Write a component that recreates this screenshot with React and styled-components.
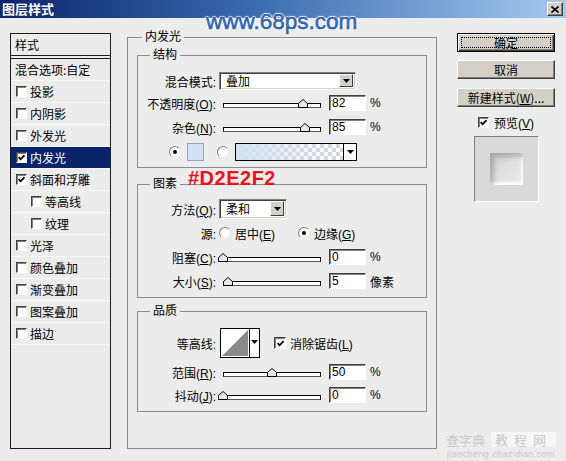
import React from "react";
import styled, { createGlobalStyle, css } from "styled-components";

const GlobalStyle = createGlobalStyle`
  html, body { margin: 0; padding: 0; background: #ececec; }
  body {
    font-family: "Liberation Sans", "Noto Sans CJK SC", sans-serif;
    font-size: 12px;
    color: #000;
  }
`;

const Window = styled.div`
  position: relative;
  width: 566px;
  height: 461px;
  background: #ececec;
  overflow: hidden;
`;

const TitleBar = styled.div`
  height: 18px;
  display: flex;
  align-items: center;
  justify-content: space-between;
  padding: 0 3px 0 2px;
  background: linear-gradient(to right, #0a246a 0%, #3b6bb0 45%, #a6caf0 100%);
`;

const Title = styled.span`
  color: #fff;
  font-family: "Noto Sans CJK SC", sans-serif;
  font-weight: 700;
  font-size: 13px;
  line-height: 14px;
`;

const CloseButton = styled.div`
  width: 16px;
  height: 14px;
  box-sizing: border-box;
  display: flex;
  align-items: center;
  justify-content: center;
  background: #d4d0c8;
  border: 1px solid;
  border-color: #fff #404040 #404040 #fff;
  box-shadow: inset -1px -1px 0 #808080;
`;

const SiteMark = styled.div`
  position: absolute;
  left: 206px;
  top: 11px;
  font-family: "Liberation Sans", sans-serif;
  font-size: 22.5px;
  line-height: 22px;
  color: #3570c2;
  text-shadow: 1px 0 0 #fff, -1px 0 0 #fff, 0 1px 0 #fff, 0 -1px 0 #fff, 0 0 3px #fff;
  -webkit-text-stroke: 0.5px #1d4a8c;
`;

const ColorNote = styled.div`
  position: absolute;
  left: 188px;
  top: 168px;
  font-family: "Liberation Sans", sans-serif;
  font-weight: 700;
  font-size: 20px;
  line-height: 20px;
  letter-spacing: 0.5px;
  color: #e8121b;
`;

const CornerMark = styled.div`
  position: absolute;
  right: 10px;
  bottom: 2px;
  display: flex;
  flex-direction: column;
  align-items: center;
  gap: 2px;
  color: #c9c9c9;
`;

const CornerTop = styled.div`
  display: flex;
  align-items: center;
  gap: 6px;
  font-family: "Noto Sans CJK SC", sans-serif;
  font-size: 13px;
  line-height: 15px;
`;

const CornerBox = styled.span`
  background: #f6f6f6;
  padding: 0 4px;
  letter-spacing: 6px;
  border-radius: 2px;
`;

const CornerUrl = styled.div`
  font-size: 9px;
  line-height: 10px;
  letter-spacing: 0.4px;
`;

const Body = styled.div`
  display: flex;
  align-items: flex-start;
  padding: 12px 0 0 10px;
`;

/* ---------- left list ---------- */

const Sidebar = styled.div`
  margin-top: 3px;
  width: 101px;
  height: 416px;
  box-sizing: border-box;
  border: 1px solid #1c1c1c;
  font-family: "Noto Sans CJK SC", sans-serif;
`;

const SideHeader = styled.div`
  height: 21px;
  line-height: 21px;
  padding-left: 4px;
  border-bottom: 4px double #1c1c1c;
`;

const SideItem = styled.div`
  display: flex;
  align-items: center;
  gap: 3px;
  height: 21px;
  border-bottom: 1px solid #f8f8f8;
  padding-left: ${(p) => (p.$indent ? 20 : p.$plain ? 4 : 5)}px;
  background: ${(p) => (p.$selected ? "#0a246a" : "transparent")};
  color: ${(p) => (p.$selected ? "#fff" : "#000")};
  white-space: nowrap;
`;

const CheckBox = styled.span`
  flex: none;
  width: ${(p) => p.$size || 11}px;
  height: ${(p) => p.$size || 11}px;
  box-sizing: border-box;
  display: inline-flex;
  align-items: center;
  justify-content: center;
  background: #fff;
  border: 1px solid;
  border-color: #404040 #fff #fff #404040;
  box-shadow: inset 1px 1px 0 #808080;
`;

const Tick = () => (
  <svg width="7" height="7" viewBox="0 0 7 7">
    <path d="M0.6 3.2 L2.6 5.3 L6.5 1.2" fill="none" stroke="#000" strokeWidth="1.7" />
  </svg>
);

function Check({ on, size }) {
  return <CheckBox $size={size}>{on && <Tick />}</CheckBox>;
}

/* ---------- main groups ---------- */

const Main = styled.div`
  margin-left: 16px;
  width: 310px;
`;

const Group = styled.fieldset`
  margin: ${(p) => (p.$outer ? "0" : `${p.$top}px 9px 0`)};
  padding: ${(p) => `${p.$pt}px 0 ${p.$pb}px`};
  border: 1px solid #8c8c8c;
  min-width: 0;
  font-family: "Liberation Sans", "Noto Sans CJK SC", sans-serif;
`;

const Legend = styled.legend`
  margin-left: ${(p) => p.$inset}px;
  padding: 0 3px;
  line-height: 14px;
  font-size: 12px;
`;

const Row = styled.div`
  display: flex;
  align-items: center;
  height: ${(p) => p.$h || 16}px;
  margin-top: ${(p) => p.$mt || 0}px;
  white-space: nowrap;
`;

const Label = styled.span`
  flex: none;
  width: 78px;
  margin-right: 3px;
  text-align: right;
`;

const SelectBox = styled.div`
  width: ${(p) => p.$w}px;
  height: ${(p) => p.$h}px;
  box-sizing: border-box;
  display: flex;
  align-items: stretch;
  background: #fff;
  border: 1px solid;
  border-color: #808080 #fff #fff #808080;
  box-shadow: inset 1px 1px 0 #404040, inset -1px -1px 0 #d4d0c8;
  padding: 1px 2px 2px 1px;
`;

const SelectText = styled.span`
  flex: 1;
  display: flex;
  align-items: center;
  padding-left: 5px;
`;

const DropButton = styled.span`
  width: 14px;
  box-sizing: border-box;
  display: flex;
  align-items: center;
  justify-content: center;
  background: #d4d0c8;
  border: 1px solid;
  border-color: #fff #404040 #404040 #fff;
`;

const Arrow = () => (
  <svg width="7" height="4" viewBox="0 0 7 4">
    <path d="M0 0 H7 L3.5 4 Z" fill="#000" />
  </svg>
);

function Select({ value, w, h }) {
  return (
    <SelectBox $w={w} $h={h}>
      <SelectText>{value}</SelectText>
      <DropButton>
        <Arrow />
      </DropButton>
    </SelectBox>
  );
}

const SliderBox = styled.div`
  position: relative;
  flex: none;
  width: 98px;
  height: 16px;
  margin: 0 8px 0 4px;
  padding-top: 8px;
  box-sizing: border-box;
`;

const Track = styled.div`
  height: 5px;
  box-sizing: border-box;
  border: 1px solid #000;
  border-bottom-color: #555;
  background: #fff;
`;

const Thumb = styled.svg`
  position: absolute;
  top: 4px;
`;

function Slider({ pct }) {
  return (
    <SliderBox>
      <Track />
      <Thumb width="10" height="9" viewBox="0 0 10 9" style={{ left: Math.round(pct * 0.97) - 5 }}>
        <path d="M0.5 8.5 V4.5 L5 0.5 L9.5 4.5 V8.5 Z" fill="#e8e8e8" stroke="#000" />
      </Thumb>
    </SliderBox>
  );
}

const NumBox = styled.div`
  flex: none;
  width: 37px;
  height: 16px;
  box-sizing: border-box;
  background: #fff;
  border: 1px solid;
  border-color: #404040 #fff #fff #404040;
  box-shadow: inset 1px 1px 0 #808080;
  padding-left: 2px;
  line-height: 14px;
`;

const Unit = styled.span`
  margin-left: 4px;
`;

function SliderRow({ label, pct, value, unit, mt }) {
  return (
    <Row $mt={mt}>
      <Label>{label}</Label>
      <Slider pct={pct} />
      <NumBox>{value}</NumBox>
      <Unit>{unit}</Unit>
    </Row>
  );
}

const RadioDot = styled.span`
  flex: none;
  width: 12px;
  height: 12px;
  box-sizing: border-box;
  border-radius: 50%;
  display: inline-flex;
  align-items: center;
  justify-content: center;
  background: #fff;
  border: 1px solid;
  border-color: #808080 #e8e8e8 #e8e8e8 #808080;
  margin-left: ${(p) => p.$ml || 0}px;

  &::after {
    content: "";
    width: 4px;
    height: 4px;
    border-radius: 50%;
    background: #000;
    display: ${(p) => (p.$on ? "block" : "none")};
  }
`;

const OptText = styled.span`
  margin-left: 4px;
`;

const Swatch = styled.span`
  flex: none;
  width: 17px;
  height: 18px;
  box-sizing: border-box;
  margin: 0 13px 0 6px;
  background: #d2e2f2;
  border: 1px solid #9aa6b4;
`;

const GradientBox = styled.span`
  flex: none;
  display: flex;
  width: 122px;
  height: 18px;
  margin-left: 6px;
  box-sizing: border-box;
  border: 1px solid #000;
`;

const GradientFill = styled.span`
  flex: 1;
  background: linear-gradient(to right, #d2e2f2 0%, rgba(210, 226, 242, 0.55) 45%, rgba(210, 226, 242, 0) 95%),
    repeating-conic-gradient(#d6d6d6 0 25%, #fff 0 50%) 0 0 / 8px 8px;
`;

const GradientDrop = styled.span`
  width: 12px;
  display: flex;
  align-items: center;
  justify-content: center;
  background: #fff;
  border-left: 1px solid #000;
`;

const ContourBox = styled.span`
  flex: none;
  display: flex;
  width: 40px;
  height: 30px;
  margin-left: 1px;
  box-sizing: border-box;
  border: 1px solid #000;
  background: #fff;
`;

const ContourDrop = styled.span`
  width: 10px;
  display: flex;
  justify-content: center;
  padding-top: 11px;
  box-sizing: border-box;
  border-left: 1px solid #000;
`;

const AntiAlias = styled.span`
  display: flex;
  align-items: center;
  gap: 4px;
  margin-left: 14px;
`;

/* ---------- right column ---------- */

const RightCol = styled.div`
  margin: 3px 0 0 20px;
  width: 98px;
  display: flex;
  flex-direction: column;
  font-family: "Noto Sans CJK SC", "Liberation Sans", sans-serif;
`;

const Button = styled.div`
  height: 19px;
  margin-top: ${(p) => p.$mt || 0}px;
  box-sizing: border-box;
  display: flex;
  align-items: center;
  justify-content: center;
  background: #d4d0c8;
  border: 1px solid;
  border-color: #fff #404040 #404040 #fff;
  box-shadow: inset -1px -1px 0 #808080;
  white-space: nowrap;

  ${(p) =>
    p.$default &&
    css`
      border-color: #000;
      box-shadow: inset 1px 1px 0 #fff, inset -1px -1px 0 #404040, inset -2px -2px 0 #808080;
      padding: 3px;
    `}
`;

const FocusRing = styled.span`
  flex: 1;
  align-self: stretch;
  display: flex;
  align-items: center;
  justify-content: center;
  border: 1px dotted #000;
`;

const PreviewToggle = styled.div`
  margin-top: 8px;
  height: 14px;
  display: flex;
  align-items: center;
  justify-content: center;
  gap: 5px;
  font-family: "Liberation Sans", "Noto Sans CJK SC", sans-serif;
`;

const PreviewBox = styled.div`
  align-self: center;
  margin-top: 7px;
  width: 65px;
  height: 66px;
  box-sizing: border-box;
  display: flex;
  align-items: center;
  justify-content: center;
  background: #d9d9d9;
  border: 1px solid;
  border-color: #7c7c7c #fff #fff #7c7c7c;
`;

const PreviewTile = styled.div`
  width: 33px;
  height: 32px;
  background: linear-gradient(135deg, #c9c9c9 0%, #dedede 45%, #ebebeb 100%);
  box-shadow: inset 4px 4px 4px rgba(0, 0, 0, 0.18), inset -2px -3px 3px #fafafa;
`;

const sideItems = [
  { name: "投影" },
  { name: "内阴影" },
  { name: "外发光" },
  { name: "内发光", on: true, selected: true },
  { name: "斜面和浮雕", on: true },
  { name: "等高线", indent: true },
  { name: "纹理", indent: true },
  { name: "光泽" },
  { name: "颜色叠加" },
  { name: "渐变叠加" },
  { name: "图案叠加" },
  { name: "描边" },
];

export default function App() {
  return (
    <Window>
      <GlobalStyle />
      <TitleBar>
        <Title>图层样式</Title>
        <CloseButton>
          <svg width="8" height="7" viewBox="0 0 8 7">
            <path d="M0.5 0.5 L7.5 6.5 M7.5 0.5 L0.5 6.5" stroke="#000" strokeWidth="1.6" />
          </svg>
        </CloseButton>
      </TitleBar>

      <Body>
        <Sidebar>
          <SideHeader>样式</SideHeader>
          <SideItem $plain>混合选项:自定</SideItem>
          {sideItems.map((it) => (
            <SideItem key={it.name} $indent={it.indent} $selected={it.selected}>
              <Check on={it.on} />
              <span>{it.name}</span>
            </SideItem>
          ))}
        </Sidebar>

        <Main>
          <Group $outer $pt={4} $pb={36}>
            <Legend $inset={14}>内发光</Legend>

            <Group $top={0} $pt={10} $pb={6}>
              <Legend $inset={12}>结构</Legend>
              <Row $h={18}>
                <Label>混合模式:</Label>
                <Select value="叠加" w={137} h={18} />
              </Row>
              <SliderRow
                mt={5}
                label={<>不透明度(<u>O</u>):</>}
                pct={82}
                value="82"
                unit="%"
              />
              <SliderRow mt={8} label={<>杂色(<u>N</u>):</>} pct={85} value="85" unit="%" />
              <Row $h={18} $mt={8}>
                <RadioDot $on $ml={31} />
                <Swatch />
                <RadioDot />
                <GradientBox>
                  <GradientFill />
                  <GradientDrop>
                    <Arrow />
                  </GradientDrop>
                </GradientBox>
              </Row>
            </Group>

            <Group $top={9} $pt={8} $pb={8}>
              <Legend $inset={12}>图素</Legend>
              <Row $h={20}>
                <Label>方法(<u>Q</u>):</Label>
                <Select value="柔和" w={68} h={20} />
              </Row>
              <Row $mt={6}>
                <Label>源:</Label>
                <RadioDot />
                <OptText>居中(<u>E</u>)</OptText>
                <RadioDot $on $ml={23} />
                <OptText>边缘(<u>G</u>)</OptText>
              </Row>
              <SliderRow mt={8} label={<>阻塞(<u>C</u>):</>} pct={0} value="0" unit="%" />
              <SliderRow mt={8} label={<>大小(<u>S</u>):</>} pct={5} value="5" unit="像素" />
            </Group>

            <Group $top={6} $pt={10} $pb={8}>
              <Legend $inset={12}>品质</Legend>
              <Row $h={30}>
                <Label>等高线:</Label>
                <ContourBox>
                  <svg width="28" height="28" viewBox="0 0 28 28">
                    <path d="M1 27 L27 1 L27 27 Z" fill="#8a8a8a" />
                  </svg>
                  <ContourDrop>
                    <Arrow />
                  </ContourDrop>
                </ContourBox>
                <AntiAlias>
                  <Check on size={12} />
                  <span>
                    消除锯齿(<u>L</u>)
                  </span>
                </AntiAlias>
              </Row>
              <SliderRow mt={6} label={<>范围(<u>R</u>):</>} pct={50} value="50" unit="%" />
              <SliderRow mt={7} label={<>抖动(<u>J</u>):</>} pct={0} value="0" unit="%" />
            </Group>
          </Group>
        </Main>

        <RightCol>
          <Button $default>
            <FocusRing>确定</FocusRing>
          </Button>
          <Button $mt={8}>取消</Button>
          <Button $mt={9}>
            <span>
              新建样式(<u>W</u>)...
            </span>
          </Button>
          <PreviewToggle>
            <Check on />
            <span>
              预览(<u>V</u>)
            </span>
          </PreviewToggle>
          <PreviewBox>
            <PreviewTile />
          </PreviewBox>
        </RightCol>
      </Body>

      <SiteMark>www.68ps.com</SiteMark>
      <ColorNote>#D2E2F2</ColorNote>
      <CornerMark>
        <CornerTop>
          <span>查字典</span>
          <CornerBox>教程网</CornerBox>
        </CornerTop>
        <CornerUrl>jiaocheng.chazidian.com</CornerUrl>
      </CornerMark>
    </Window>
  );
}
